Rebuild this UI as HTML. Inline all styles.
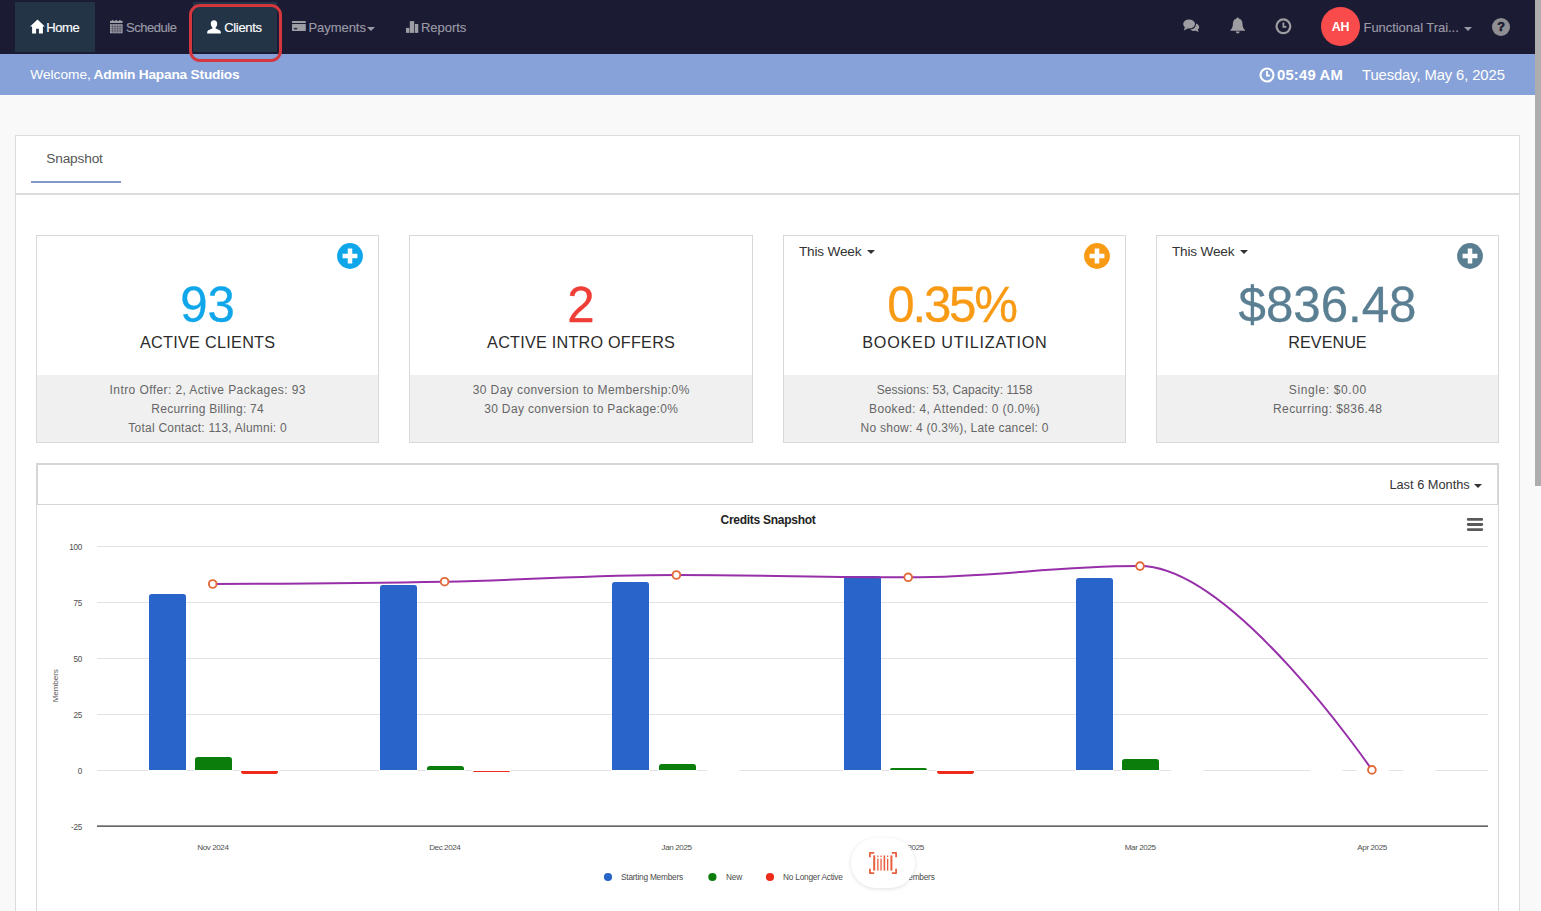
<!DOCTYPE html>
<html>
<head>
<meta charset="utf-8">
<title>Dashboard</title>
<style>
*{box-sizing:border-box;margin:0;padding:0}
html,body{width:1541px;height:911px;overflow:hidden;background:#f9f9f9;font-family:"Liberation Sans",sans-serif;color:#333}
.abs{position:absolute}
#nav{position:absolute;left:0;top:0;width:1541px;height:54px;background:#1b1b33}
.tab{position:absolute;top:2px;height:50px;background:#243447}
.nt{position:absolute;top:0;height:54px;line-height:55px;font-size:13px;white-space:nowrap;-webkit-text-stroke:0.15px currentColor}
#welcome{position:absolute;left:0;top:54px;width:1541px;height:41px;background:#87a2d8;color:#fff}
#welcome .t{position:absolute;top:0;line-height:41px;font-size:14.5px;white-space:nowrap}
#panel{position:absolute;left:15px;top:135px;width:1505px;height:776px;background:#fff;border:1px solid #dcdcdc;border-bottom:none}
.card{position:absolute;top:235px;width:343px;height:208px;background:#fff;border:1px solid #d9d9d9}
.card .foot{position:absolute;left:0;right:0;top:139px;bottom:0;background:#f0f0f0}
.card .num{-webkit-text-stroke:0.3px currentColor;position:absolute;left:0;right:0;top:41px;text-align:center;font-size:49.2px;line-height:56px;white-space:nowrap}
.card .lbl{position:absolute;left:0;right:0;top:94px;text-align:center;font-size:16.2px;line-height:24px;color:#2b2b2b;white-space:nowrap}
.card .ft{position:absolute;left:0;right:0;text-align:center;font-size:12px;line-height:19px;color:#666;white-space:nowrap}
.card .dd{position:absolute;left:15px;top:6px;font-size:13.6px;letter-spacing:-0.18px;line-height:20px;color:#333;white-space:nowrap}
.plus{position:absolute;left:300.4px;top:7px;width:26px;height:26px}
.caret{display:inline-block;width:0;height:0;border-left:4px solid transparent;border-right:4px solid transparent;border-top:4px solid currentColor;vertical-align:middle;margin-left:4px}
</style>
</head>
<body>
<!-- NAV -->
<div id="nav">
  <div class="tab" style="left:15px;width:80px"></div>
  <div class="tab" style="left:193px;width:84px"></div>
  <!-- home -->
  <svg class="abs" style="left:29.5px;top:18.5px" width="15" height="15" viewBox="0 0 15 15"><path d="M7.5 0.4 L14.9 7.6 L12.9 7.6 L12.9 14.6 L8.9 14.6 L8.9 9.8 L6.1 9.8 L6.1 14.6 L2.1 14.6 L2.1 7.6 L0.1 7.6 Z" fill="#fff"/></svg>
  <div class="nt" style="left:46.3px;color:#fff;letter-spacing:-0.4px">Home</div>
  <!-- calendar -->
  <svg class="abs" style="left:110px;top:19.8px" width="13" height="14" viewBox="0 0 13 14"><g fill="#9d9da6"><rect x="0" y="0.9" width="12.6" height="2.1"/><rect x="1.8" y="0" width="1.5" height="1.6"/><rect x="5.5" y="0" width="1.5" height="1.6"/><rect x="9.2" y="0" width="1.5" height="1.6"/><rect x="0" y="4.2" width="12.6" height="9.1"/></g><g stroke="#1b1b33" stroke-width="0.7" opacity="0.6"><path d="M0.6 6.6H12M0.6 8.8H12M0.6 11H12M2.6 4.8V12.8M5.1 4.8V12.8M7.6 4.8V12.8M10.1 4.8V12.8"/></g></svg>
  <div class="nt" style="left:126px;color:#9a9aa6;letter-spacing:-0.47px">Schedule</div>
  <!-- user -->
  <svg class="abs" style="left:207px;top:19.5px" width="14" height="14" viewBox="0 0 14 14"><path d="M7 0.2 C9 0.2 10.2 1.6 10.2 3.6 C10.2 5.4 9.5 6.8 8.6 7.6 L8.6 8.6 C10.5 9.4 12.6 10 13.6 11.2 L13.9 13.6 L0.1 13.6 L0.4 11.2 C1.4 10 3.5 9.4 5.4 8.6 L5.4 7.6 C4.5 6.8 3.8 5.4 3.8 3.6 C3.8 1.6 5 0.2 7 0.2 Z" fill="#fff"/></svg>
  <div class="nt" style="left:224.3px;color:#fff;letter-spacing:-0.35px">Clients</div>
  <!-- credit card -->
  <svg class="abs" style="left:292.2px;top:21px" width="14" height="11" viewBox="0 0 14 11"><g fill="#9d9da6"><rect x="0" y="0" width="13.8" height="1.9" rx="0.5"/><rect x="0" y="3.1" width="13.8" height="7" rx="0.5"/></g><rect x="1.8" y="6.9" width="3.4" height="1.5" fill="#1b1b33" opacity="0.9"/></svg>
  <div class="nt" style="left:308.5px;color:#9a9aa6;letter-spacing:-0.06px">Payments</div>
  <div class="abs" style="left:367.3px;top:27px;width:0;height:0;border-left:4px solid transparent;border-right:4px solid transparent;border-top:4.3px solid #9a9aa6"></div>
  <!-- stats -->
  <svg class="abs" style="left:405.9px;top:21px" width="13" height="12" viewBox="0 0 13 12"><g fill="#9d9da6"><rect x="0" y="6.9" width="3.4" height="5"/><rect x="3.8" y="0.1" width="4.4" height="11.8"/><rect x="8.9" y="3" width="3.4" height="8.9"/></g></svg>
  <div class="nt" style="left:421px;color:#9a9aa6;letter-spacing:-0.03px">Reports</div>
  <!-- right icons -->
  <svg class="abs" style="left:1183.4px;top:19px" width="16.6" height="14" viewBox="0 0 18 14" preserveAspectRatio="none"><g fill="#9d9da2"><ellipse cx="6.6" cy="5" rx="6.4" ry="4.6"/><path d="M2 8 L1 11.6 L5.4 9.4Z"/><path d="M14 4.4 C16.2 5 17.6 6.4 17.6 8 C17.6 9 17 10 16 10.6 L17 13 L13.6 11.8 C11.4 12.2 9.2 11.6 8 10.4 C11.6 10.2 14.4 7.8 14 4.4Z"/></g></svg>
  <svg class="abs" style="left:1229.8px;top:17.2px" width="15.4" height="17" viewBox="0 0 16 17" preserveAspectRatio="none"><g fill="#9d9da2"><path d="M8 0.4 C8.7 0.4 9.2 0.9 9.2 1.6 C11.8 2.2 13 4.4 13 7 C13 10 14 11.6 15.6 13 L15.6 13.8 L0.4 13.8 L0.4 13 C2 11.6 3 10 3 7 C3 4.4 4.2 2.2 6.8 1.6 C6.8 0.9 7.3 0.4 8 0.4Z"/><path d="M6 14.6 L10 14.6 C10 15.8 9.1 16.6 8 16.6 C6.9 16.6 6 15.8 6 14.6Z"/></g></svg>
  <svg class="abs" style="left:1275.2px;top:17.6px" width="17" height="17" viewBox="0 0 17 17"><circle cx="8.4" cy="8.3" r="6.9" fill="none" stroke="#9d9da2" stroke-width="2.2"/><path d="M8.4 4.6 V8.9 H11.4" fill="none" stroke="#9d9da2" stroke-width="1.8"/></svg>
  <div class="abs" style="left:1321px;top:7px;width:39px;height:39px;border-radius:50%;background:#f94b4b;color:#fff;font-size:12.4px;font-weight:bold;line-height:40.5px;text-align:center;letter-spacing:-0.2px">AH</div>
  <div class="nt" style="left:1363.5px;color:#9a9aa6;letter-spacing:-0.05px">Functional Trai...</div>
  <div class="abs" style="left:1464px;top:26.5px;width:0;height:0;border-left:4px solid transparent;border-right:4px solid transparent;border-top:4.5px solid #9a9aa6"></div>
  <div class="abs" style="left:1492px;top:18px;width:18px;height:18px;border-radius:50%;background:#8f8f93;color:#1b1b33;font-size:12.5px;font-weight:bold;line-height:18.5px;text-align:center;-webkit-text-stroke:0.7px #1b1b33">?</div>
</div>
<!-- red highlight -->
<div class="abs" style="left:189px;top:4px;width:93px;height:58px;border:3px solid #d3383e;border-radius:11px;z-index:5"></div>
<!-- WELCOME -->
<div id="welcome">
  <div class="t" style="left:30.3px;font-size:13.7px;letter-spacing:0px;line-height:41px">Welcome,</div>
  <div class="t" style="left:93.6px;font-size:13.7px;letter-spacing:-0.2px;line-height:41px;font-weight:bold">Admin Hapana Studios</div>
  <svg class="abs" style="left:1259px;top:12.5px" width="16" height="16" viewBox="0 0 16 16"><circle cx="8" cy="8" r="6.5" fill="none" stroke="#fff" stroke-width="2.1"/><path d="M8 4V8.6H11" fill="none" stroke="#fff" stroke-width="1.8"/></svg>
  <div class="t" style="left:1277px;font-weight:bold;font-size:14.8px;letter-spacing:0.2px;line-height:42px">05:49 AM</div>
  <div class="t" style="left:1362px;font-size:14.8px;line-height:42px;letter-spacing:-0.1px">Tuesday, May 6, 2025</div>
</div>
<!-- PANEL -->
<div id="panel"></div>
<div class="abs" style="left:46.3px;top:150px;font-size:13.7px;line-height:18px;color:#555;letter-spacing:-0.18px">Snapshot</div>
<div class="abs" style="left:31px;top:181px;width:90px;height:2px;background:#8398c6"></div>
<div class="abs" style="left:16px;top:193px;width:1503px;height:2px;background:#dcdcdc"></div>

<!-- CARDS -->
<div class="card" style="left:36px">
  <svg class="plus" viewBox="0 0 26 26"><circle cx="13" cy="13" r="12.9" fill="#0fa6ea"/><path d="M13 5.6V20.4M5.6 13H20.4" stroke="#fff" stroke-width="4.5"/></svg>
  <div class="num" style="color:#0fa6ea">93</div>
  <div class="lbl" style="letter-spacing:0.3px;padding-left:0.3px">ACTIVE CLIENTS</div>
  <div class="foot"></div>
  <div class="ft" style="top:145px;letter-spacing:0.41px;padding-left:0.41px">Intro Offer: 2, Active Packages: 93</div>
  <div class="ft" style="top:164px;letter-spacing:0.245px;padding-left:0.245px">Recurring Billing: 74</div>
  <div class="ft" style="top:183px;letter-spacing:0.23px;padding-left:0.23px">Total Contact: 113, Alumni: 0</div>
</div>
<div class="card" style="left:409px;width:344px">
  <div class="num" style="color:#ef3e36">2</div>
  <div class="lbl" style="letter-spacing:0.24px;padding-left:0.24px">ACTIVE INTRO OFFERS</div>
  <div class="foot"></div>
  <div class="ft" style="top:145px;letter-spacing:0.42px;padding-left:0.42px">30 Day conversion to Membership:0%</div>
  <div class="ft" style="top:164px;letter-spacing:0.34px;padding-left:0.34px">30 Day conversion to Package:0%</div>
</div>
<div class="card" style="left:783px">
  <svg class="plus" viewBox="0 0 26 26"><circle cx="13" cy="13" r="12.9" fill="#f99a14"/><path d="M13 5.6V20.4M5.6 13H20.4" stroke="#fff" stroke-width="4.5"/></svg>
  <div class="dd">This Week <span class="caret" style="margin-left:2px"></span></div>
  <div class="num" style="color:#f99a14;letter-spacing:-2.2px;left:-6px">0.35%</div>
  <div class="lbl" style="letter-spacing:0.76px;padding-left:0.76px">BOOKED UTILIZATION</div>
  <div class="foot"></div>
  <div class="ft" style="top:145px;letter-spacing:0.04px;padding-left:0.04px">Sessions: 53, Capacity: 1158</div>
  <div class="ft" style="top:164px;letter-spacing:0.38px;padding-left:0.38px">Booked: 4, Attended: 0 (0.0%)</div>
  <div class="ft" style="top:183px;letter-spacing:0.24px;padding-left:0.24px">No show: 4 (0.3%), Late cancel: 0</div>
</div>
<div class="card" style="left:1156px">
  <svg class="plus" viewBox="0 0 26 26"><circle cx="13" cy="13" r="12.9" fill="#5b7f92"/><path d="M13 5.6V20.4M5.6 13H20.4" stroke="#fff" stroke-width="4.5"/></svg>
  <div class="dd">This Week <span class="caret" style="margin-left:2px"></span></div>
  <div class="num" style="color:#5b7f92">$836.48</div>
  <div class="lbl">REVENUE</div>
  <div class="foot"></div>
  <div class="ft" style="top:145px;letter-spacing:0.6px;padding-left:0.6px">Single: $0.00</div>
  <div class="ft" style="top:164px;letter-spacing:0.41px;padding-left:0.41px">Recurring: $836.48</div>
</div>

<!-- CHART -->
<div class="abs" id="chartbox" style="left:36px;top:463px;width:1463px;height:448px;border:1px solid #dadada;border-bottom:none;background:#fff"></div>
<div class="abs" style="left:36px;top:463px;width:1463px;height:42px;border:2px solid #d6d6d6;border-bottom:1px solid #d6d6d6"></div>

<!--CHARTSVG-->
<svg class="abs" style="left:0;top:0" width="1541" height="911" viewBox="0 0 1541 911" font-family="Liberation Sans, sans-serif">
<path d="M97.0 546.5H1488.0" stroke="#e3e3e3" stroke-width="1"/>
<path d="M97.0 602.5H1488.0" stroke="#e3e3e3" stroke-width="1"/>
<path d="M97.0 658.5H1488.0" stroke="#e3e3e3" stroke-width="1"/>
<path d="M97.0 714.5H1488.0" stroke="#e3e3e3" stroke-width="1"/>
<path d="M97.0 770.5H1488.0" stroke="#e3e3e3" stroke-width="1"/>
<text x="82.1" y="549.7" text-anchor="end" font-size="8.2" fill="#505050" letter-spacing="-0.25">100</text>
<text x="82.1" y="605.7" text-anchor="end" font-size="8.2" fill="#505050" letter-spacing="-0.25">75</text>
<text x="82.1" y="661.7" text-anchor="end" font-size="8.2" fill="#505050" letter-spacing="-0.25">50</text>
<text x="82.1" y="717.7" text-anchor="end" font-size="8.2" fill="#505050" letter-spacing="-0.25">25</text>
<text x="82.1" y="773.7" text-anchor="end" font-size="8.2" fill="#505050" letter-spacing="-0.25">0</text>
<text x="82.1" y="829.7" text-anchor="end" font-size="8.2" fill="#505050" letter-spacing="-0.25">-25</text>
<text transform="translate(58,685.8) rotate(-90)" text-anchor="middle" font-size="8.1" fill="#5a5a5a" letter-spacing="-0.1">Members</text>
<rect x="148" y="770" width="39" height="1" fill="#fff"/>
<path d="M149 770V596.8Q149 594 151.8 594H183.2Q186 594 186 596.8V770Z" fill="#2864c9"/>
<rect x="194" y="770" width="39" height="1" fill="#fff"/>
<path d="M195 770V759.8Q195 757 197.8 757H229.2Q232 757 232 759.8V770Z" fill="#0b7d0b"/>
<rect x="240" y="770" width="39" height="1" fill="#fff"/>
<path d="M241 771V771.2Q241 774 243.8 774H275.2Q278 774 278 771.2V771Z" fill="#ee2b1b"/>
<rect x="379" y="770" width="39" height="1" fill="#fff"/>
<path d="M380 770V587.8Q380 585 382.8 585H414.2Q417 585 417 587.8V770Z" fill="#2864c9"/>
<rect x="426" y="770" width="39" height="1" fill="#fff"/>
<path d="M427 770V768.8Q427 766 429.8 766H461.2Q464 766 464 768.8V770Z" fill="#0b7d0b"/>
<rect x="472" y="770" width="39" height="1" fill="#fff"/>
<path d="M473 771V771.0Q473 772 474 772H509Q510 772 510 771.0V771Z" fill="#ee2b1b"/>
<rect x="611" y="770" width="39" height="1" fill="#fff"/>
<path d="M612 770V584.8Q612 582 614.8 582H646.2Q649 582 649 584.8V770Z" fill="#2864c9"/>
<rect x="658" y="770" width="39" height="1" fill="#fff"/>
<path d="M659 770V766.8Q659 764 661.8 764H693.2Q696 764 696 766.8V770Z" fill="#0b7d0b"/>
<rect x="707.4" y="770" width="32.2" height="1" fill="#fff"/>
<rect x="843" y="770" width="39" height="1" fill="#fff"/>
<path d="M844 770V578.8Q844 576 846.8 576H878.2Q881 576 881 578.8V770Z" fill="#2864c9"/>
<rect x="889" y="770" width="39" height="1" fill="#fff"/>
<path d="M890 770V770.0Q890 768 892 768H925Q927 768 927 770.0V770Z" fill="#0b7d0b"/>
<rect x="936" y="770" width="39" height="1" fill="#fff"/>
<path d="M937 771V771.2Q937 774 939.8 774H971.2Q974 774 974 771.2V771Z" fill="#ee2b1b"/>
<rect x="1075" y="770" width="39" height="1" fill="#fff"/>
<path d="M1076 770V580.8Q1076 578 1078.8 578H1110.2Q1113 578 1113 580.8V770Z" fill="#2864c9"/>
<rect x="1121" y="770" width="39" height="1" fill="#fff"/>
<path d="M1122 770V761.8Q1122 759 1124.8 759H1156.2Q1159 759 1159 761.8V770Z" fill="#0b7d0b"/>
<rect x="1171.4" y="770" width="32.2" height="1" fill="#fff"/>
<rect x="1310.4" y="770" width="32.2" height="1" fill="#fff"/>
<rect x="1356.4" y="770" width="32.2" height="1" fill="#fff"/>
<rect x="1403.4" y="770" width="32.2" height="1" fill="#fff"/>
<path d="M97.0 826.2H1488.0" stroke="#333" stroke-width="1.2"/>
<text x="212.9" y="850" text-anchor="middle" font-size="8.1" fill="#505050" letter-spacing="-0.42">Nov 2024</text>
<text x="444.8" y="850" text-anchor="middle" font-size="8.1" fill="#505050" letter-spacing="-0.42">Dec 2024</text>
<text x="676.6" y="850" text-anchor="middle" font-size="8.1" fill="#505050" letter-spacing="-0.42">Jan 2025</text>
<text x="908.4" y="850" text-anchor="middle" font-size="8.1" fill="#505050" letter-spacing="-0.42">Feb 2025</text>
<text x="1140.2" y="850" text-anchor="middle" font-size="8.1" fill="#505050" letter-spacing="-0.42">Mar 2025</text>
<text x="1372.1" y="850" text-anchor="middle" font-size="8.1" fill="#505050" letter-spacing="-0.42">Apr 2025</text>
<path d="M212.7 584.0 C212.7 584.0 351.8 583.5 444.6 581.7 C537.3 579.9 583.6 575.0 676.4 575.0 C769.1 575.0 815.5 577.3 908.2 577.3 C1001.0 577.3 1047.3 566.1 1140.0 566.1 C1232.8 566.1 1371.9 769.9 1371.9 769.9" fill="none" stroke="#962fa8" stroke-width="2" stroke-linecap="round" stroke-linejoin="round"/>
<circle cx="212.7" cy="584.0" r="3.85" fill="#fff" stroke="#e36a3a" stroke-width="1.9"/>
<circle cx="444.6" cy="581.7" r="3.85" fill="#fff" stroke="#e36a3a" stroke-width="1.9"/>
<circle cx="676.4" cy="575.0" r="3.85" fill="#fff" stroke="#e36a3a" stroke-width="1.9"/>
<circle cx="908.2" cy="577.3" r="3.85" fill="#fff" stroke="#e36a3a" stroke-width="1.9"/>
<circle cx="1140.0" cy="566.1" r="3.85" fill="#fff" stroke="#e36a3a" stroke-width="1.9"/>
<circle cx="1371.9" cy="769.9" r="3.85" fill="#fff" stroke="#e36a3a" stroke-width="1.9"/>
<text x="768" y="523.8" text-anchor="middle" font-size="12" font-weight="bold" fill="#222" letter-spacing="-0.27">Credits Snapshot</text>
<path d="M1468.2 519.4H1481.8M1468.2 524.5H1481.8M1468.2 529.6H1481.8" stroke="#5a5a5a" stroke-width="2.8" stroke-linecap="round"/>
<circle cx="608" cy="877" r="4.1" fill="#2864c9"/>
<text x="621" y="880.2" font-size="8.3" fill="#4a4a4a" letter-spacing="-0.22">Starting Members</text>
<circle cx="712.4" cy="877" r="4.1" fill="#0b7d0b"/>
<text x="726" y="880.2" font-size="8.3" fill="#4a4a4a" letter-spacing="-0.22">New</text>
<circle cx="770" cy="877" r="4.1" fill="#ee2b1b"/>
<text x="783" y="880.2" font-size="8.3" fill="#4a4a4a" letter-spacing="-0.22">No Longer Active</text>
<text x="934.6" y="880.2" text-anchor="end" font-size="8.3" fill="#4a4a4a" letter-spacing="-0.22">Ending Members</text>
</svg>
<!--/CHARTSVG-->
<div class="abs" style="left:1389.4px;top:475.5px;font-size:12.8px;line-height:18px;color:#333;white-space:nowrap;letter-spacing:0px">Last 6 Months<span class="caret" style="margin-left:4.6px;border-left-width:4.2px;border-right-width:4.2px;border-top-width:4.5px;position:relative;top:0.5px"></span></div>
<!-- floating scan button -->
<div class="abs" style="left:851px;top:838px;width:64px;height:50px;border-radius:25px;background:#fff;box-shadow:0 1px 4px rgba(0,0,0,0.12)"></div>
<svg class="abs" style="left:869px;top:852px" width="28" height="22" viewBox="0 0 28 22"><g fill="none" stroke="#e8603f" stroke-width="1.8" stroke-linejoin="round"><path d="M0.9 5.2V0.9H5.2M22.8 0.9H27.1V5.2M27.1 16.8V21.1H22.8M5.2 21.1H0.9V16.8"/></g><g fill="#e8603f"><rect x="4.2" y="3.4" width="2" height="15.2"/><rect x="8.2" y="6.6" width="1.3" height="12"/><rect x="8.2" y="3.6" width="1.3" height="1.4"/><rect x="11.4" y="6.6" width="1.3" height="12"/><rect x="11.4" y="3.6" width="1.3" height="1.4"/><rect x="14.6" y="3.4" width="1.6" height="15.2"/><rect x="18" y="6.6" width="1.3" height="12"/><rect x="18" y="3.6" width="1.3" height="1.4"/><rect x="21.4" y="3.4" width="2" height="15.2"/></g></svg>
<!-- SCROLLBAR -->
<div class="abs" style="left:1535px;top:0;width:6px;height:911px;background:#fafafa"></div>
<div class="abs" style="left:1535px;top:0;width:6px;height:486px;background:#adadad"></div>
</body>
</html>
